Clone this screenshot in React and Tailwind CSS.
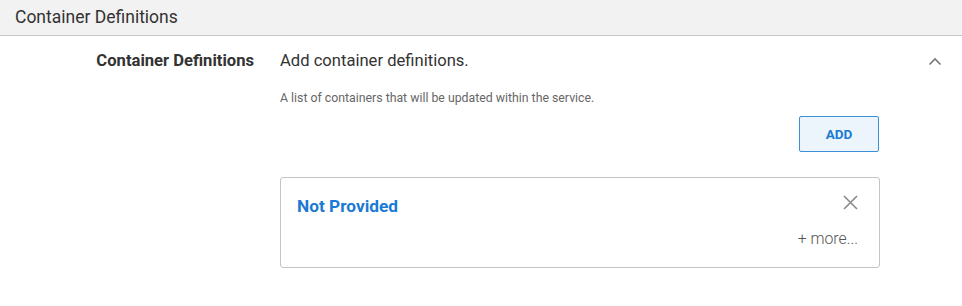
/**
 * Container Definitions section
 *
 * Section header bar, then a label / field row with a collapsible list
 * of container definitions.
 */

function ChevronUp() {
  return (
    <svg width="14" height="9" viewBox="0 0 14 9" fill="none" aria-hidden="true">
      <path d="M1.5 7.5 L7 2 L12.5 7.5" stroke="#777" strokeWidth="1.6" />
    </svg>
  );
}

function CloseIcon() {
  return (
    <svg width="15" height="15" viewBox="0 0 15 15" fill="none" aria-hidden="true">
      <path d="M1 1 L14 14 M14 1 L1 14" stroke="#8a8a8a" strokeWidth="1.6" />
    </svg>
  );
}

export default function App() {
  return (
    <div className="w-[962px] h-[306px] bg-white font-['Roboto',sans-serif] text-[#333]">
      {/* Section header */}
      <div className="h-[36px] bg-[#f2f2f2] border-b border-[#c6c6c6] flex items-center pl-[15px]">
        <span className="text-[17.5px] text-[#333]">Container Definitions</span>
      </div>

      {/* Field row */}
      <div className="flex pt-[14px]">
        <div className="w-[255px] shrink-0 flex justify-end pr-[1px]">
          <span className="text-[16.6px] font-bold text-[#333] leading-[20px] mt-[1px]">
            Container Definitions
          </span>
        </div>

        <div className="ml-[25px] w-[600px]">
          <div className="text-[16.6px] leading-[20px] text-[#333] mt-[1px]">
            Add container definitions.
          </div>
          <div className="text-[12.3px] leading-[16px] text-[#666] mt-[19px]">
            A list of containers that will be updated within the service.
          </div>

          <div className="flex justify-end mt-[10px] pr-[1px]">
            <button className="w-[80px] h-[36px] border border-[#3d8fdc] rounded-[2px] bg-[#ecf4fc] text-[#1a7ad4] text-[13.5px] font-bold">
              ADD
            </button>
          </div>

          {/* Item card */}
          <div className="mt-[25px] w-[600px] h-[91px] border border-[#c4c4c4] rounded-[3px] px-[16px] pt-[16px] relative">
            <div className="text-[17.3px] font-bold text-[#1a7ad4] leading-[24px]">Not Provided</div>
            <div className="absolute right-[21px] top-[17px]">
              <CloseIcon />
            </div>
            <div className="flex justify-end pr-[5px] mt-[11px] text-[15.8px] font-light text-[#555] leading-[20px]">
              + more...
            </div>
          </div>
        </div>

        <div className="ml-auto pr-[20px] pt-[7px]">
          <ChevronUp />
        </div>
      </div>
    </div>
  );
}
